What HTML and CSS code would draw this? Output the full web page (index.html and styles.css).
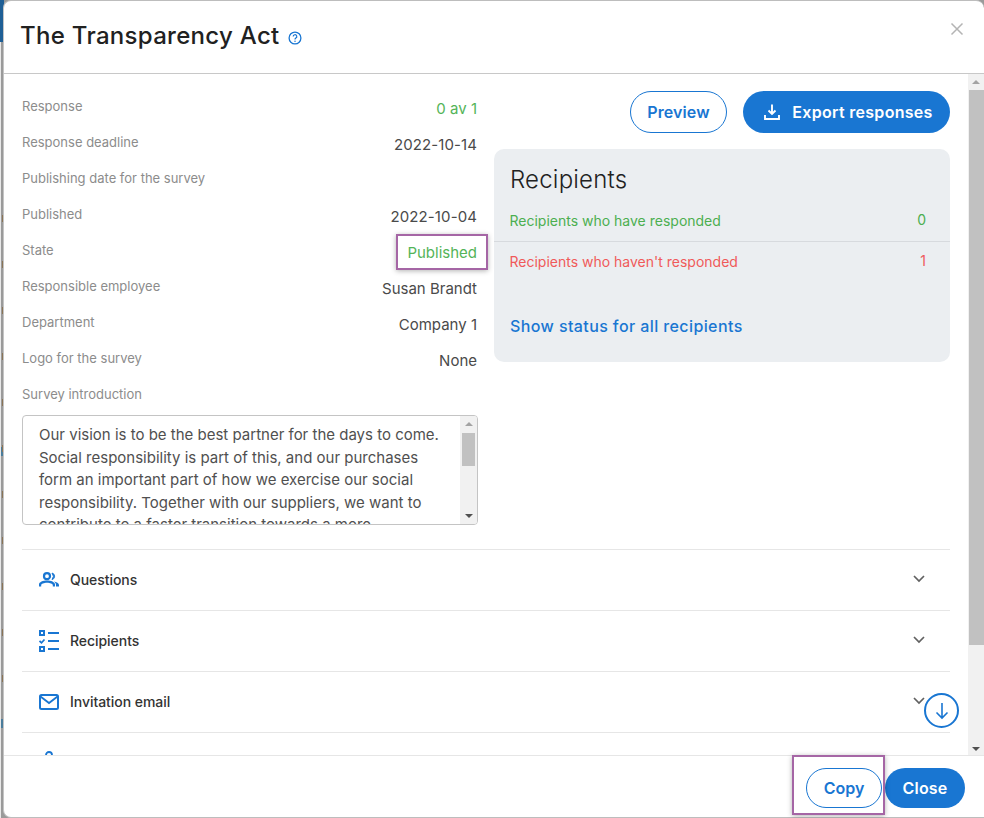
FILE: index.html
```html
<!DOCTYPE html>
<html lang="en">
<head>
<meta charset="utf-8">
<title>The Transparency Act</title>
<link rel="stylesheet" href="styles.css">
</head>
<body>
<div class="backdrop"></div>
<div class="modal">
  <header class="head">
    <h1 class="title">The Transparency Act</h1>
    <svg class="help" viewBox="0 0 14 14" width="14" height="14"><circle cx="7" cy="7" r="5.9" fill="none" stroke="#1976d2" stroke-width="1.3"/><path d="M5.2 5.6a1.8 1.8 0 1 1 2.7 1.5c-.6.4-.9.7-.9 1.3" fill="none" stroke="#1976d2" stroke-width="1.2"/><circle cx="7" cy="10.2" r=".75" fill="#1976d2"/></svg>
    <svg class="close-x" viewBox="0 0 14 14" width="14" height="14"><path d="M1.5 1.5l11 11M12.5 1.5l-11 11" stroke="#b4b4b4" stroke-width="1.5" fill="none"/></svg>
  </header>
  <div class="body">
    <main class="content">
      <div class="top">
        <section class="details">
          <div class="row"><span class="lab">Response</span><span class="val green">0 av 1</span></div>
          <div class="row"><span class="lab">Response deadline</span><span class="val date">2022-10-14</span></div>
          <div class="row"><span class="lab">Publishing date for the survey</span><span class="val"></span></div>
          <div class="row"><span class="lab">Published</span><span class="val date">2022-10-04</span></div>
          <div class="row"><span class="lab">State</span><span class="val green">Published</span></div>
          <div class="row"><span class="lab">Responsible employee</span><span class="val">Susan Brandt</span></div>
          <div class="row"><span class="lab">Department</span><span class="val">Company 1</span></div>
          <div class="row"><span class="lab">Logo for the survey</span><span class="val">None</span></div>
          <div class="row"><span class="lab">Survey introduction</span></div>
          <div class="intro">
            <p class="intro-text">Our vision is to be the best partner for the days to come. Social responsibility is part of this, and our purchases form an important part of how we exercise our social responsibility. Together with our suppliers, we want to contribute to a faster transition towards a more sustainable society.</p>
            <div class="mini-bar">
              <span class="arrow-up small"></span>
              <span class="mini-thumb"></span>
              <span class="arrow-down small"></span>
            </div>
          </div>
        </section>
        <section class="side">
          <div class="actions">
            <button class="btn outline preview">Preview</button>
            <button class="btn solid export">
              <svg viewBox="0 0 16 16" width="16" height="16"><path d="M8 .5v9.500M4.500 6.500L8 10l3.500-3.500M1 11v4h14v-4" fill="none" stroke="#fff" stroke-width="1.900"/></svg>
              Export responses
            </button>
          </div>
          <div class="card">
            <h2 class="card-title">Recipients</h2>
            <div class="stat green first"><span>Recipients who have responded</span><span class="num">0</span></div>
            <div class="stat red"><span>Recipients who haven't responded</span><span class="num">1</span></div>
            <a class="show-all">Show status for all recipients</a>
          </div>
        </section>
      </div>
      <div class="acc">
        <svg class="acc-icon" viewBox="0 0 20 16" width="20" height="16"><circle cx="8" cy="4.200" r="3" fill="none" stroke="#1976d2" stroke-width="2.200"/><path d="M13 1a3.400 3.400 0 0 1 0 6.600 5 5 0 0 0 0-6.600z" fill="#1976d2" stroke="#1976d2"/><path d="M0 15v-2C0 10.500 4 9 8 9s8 1.500 8 4v2h-2.200v-1.500c0-1.300-2.800-2.300-5.800-2.300s-5.800 1-5.800 2.300V15z" fill="#1976d2" transform="translate(0 -.5)"/><path d="M15 9.500c2.500.4 5 1.500 5 3.500v1.500h-3V13c0-1.500-.8-2.700-2-3.500z" fill="#1976d2"/></svg>
        <span class="acc-label">Questions</span>
        <svg class="chev" viewBox="0 0 12 8" width="12" height="8"><path d="M1 1l5 5 5-5" fill="none" stroke="#616161" stroke-width="1.700"/></svg>
      </div>
      <div class="acc">
        <svg class="acc-icon tall" viewBox="0 0 20 22" width="20" height="22"><path d="M1 1h4v4H1zM1 17h4v4H1z" fill="none" stroke="#1976d2" stroke-width="2"/><path d="M.5 11l2 1.800L5.500 9.500" fill="none" stroke="#1976d2" stroke-width="1.700"/><path d="M9 3h11M9 11h11M9 19h11" stroke="#1976d2" stroke-width="2"/></svg>
        <span class="acc-label">Recipients</span>
        <svg class="chev" viewBox="0 0 12 8" width="12" height="8"><path d="M1 1l5 5 5-5" fill="none" stroke="#616161" stroke-width="1.700"/></svg>
      </div>
      <div class="acc">
        <svg class="acc-icon" viewBox="0 0 20 16" width="20" height="16"><rect x="1" y="1" width="18" height="14" rx="1.500" fill="none" stroke="#1976d2" stroke-width="2"/><path d="M1.500 2.500L10 9l8.500-6.500" fill="none" stroke="#1976d2" stroke-width="1.800"/></svg>
        <span class="acc-label">Invitation email</span>
        <svg class="chev" viewBox="0 0 12 8" width="12" height="8"><path d="M1 1l5 5 5-5" fill="none" stroke="#616161" stroke-width="1.700"/></svg>
      </div>
      <div class="acc">
        <svg class="acc-icon" viewBox="0 0 20 16" width="20" height="16"><circle cx="10" cy="4" r="3" fill="none" stroke="#1976d2" stroke-width="1.800"/></svg>
      </div>
    </main>
    <div class="bar">
      <span class="arrow-up"></span>
      <span class="thumb"></span>
      <span class="arrow-down"></span>
    </div>
    <button class="jump" aria-label="Scroll down">
      <svg viewBox="0 0 16 20" width="16" height="20"><path d="M8 2v15M2.500 11.500L8 17l5.500-5.500" fill="none" stroke="#1976d2" stroke-width="1.600"/></svg>
    </button>
  </div>
  <footer class="foot">
    <button class="btn outline copy">Copy</button>
    <button class="btn solid close">Close</button>
  </footer>
</div>
<div class="mark mark-state"></div>
<div class="mark mark-copy"></div>
</body>
</html>
```

FILE: styles.css
```css
* { box-sizing: border-box; }
html, body { margin: 0; height: 100%; }
body {
  width: 984px;
  height: 818px;
  overflow: hidden;
  position: relative;
  background:
    linear-gradient(#1f5f96, #1f5f96) 0 0 / 4px 42px no-repeat,
    linear-gradient(#4a7d9c, #4a7d9c) 1px 447px / 2px 9px no-repeat,
    linear-gradient(#4a7d9c, #4a7d9c) 1px 719px / 2px 9px no-repeat,
    linear-gradient(90deg, #e8e8e8 0 1px, #9a9a9a 1px);
  font-family: Inter, "Liberation Sans", sans-serif;
  color: #333;
}
.backdrop {
  position: absolute;
  left: 2px;
  top: 215px;
  width: 2px;
  height: 476px;
  background: repeating-linear-gradient(180deg, #8a7456 0 7px, transparent 7px 46px);
}
.modal {
  position: relative;
  margin-left: 3px;
  width: 981px;
  height: 818px;
  background: #fff;
  border-top: 1px solid #bdbdbd;
  border-bottom: 1px solid #bdbdbd;
  border-left: 1px solid #c4c4c4;
  border-radius: 8px 8px 0 8px;
  display: flex;
  flex-direction: column;
  overflow: hidden;
}
.head {
  height: 73px;
  flex: none;
  display: flex;
  align-items: center;
  padding: 0 20px 3px 16px;
  border-bottom: 1px solid #c8c8c8;
}
.title {
  margin: 0;
  font-size: 24px;
  font-weight: 500;
  color: #212121;
  letter-spacing: .3px;
}
.help { margin: 4px 0 0 8px; }
.close-x { margin: -13px 0 0 auto; }
.body {
  flex: 1;
  min-height: 0;
  display: flex;
  position: relative;
  overflow: hidden;
}
.content {
  width: 964px;
  flex: none;
  padding: 14px 18px 0 18px;
  overflow: hidden;
}
.top { display: flex; gap: 16px; height: 461px; }
.details { width: 456px; flex: none; }
.row {
  height: 36px;
  display: flex;
  justify-content: space-between;
  align-items: flex-start;
}
.lab { height: 36px; font-size: 13px; line-height: 36px; color: #8c8c8c; }
.val {
  font-size: 15px;
  line-height: 36px;
  margin: 3px 1px 0 0;
  color: #4a4a4a;
}
.date { letter-spacing: .1px; }
.green { color: #4caf50; }
.red { color: #f05a5a; }
.val.green { color: #54b458; }
.intro {
  margin-top: 3px;
  height: 110px;
  border: 1px solid #c4c4c4;
  border-radius: 4px;
  position: relative;
  overflow: hidden;
}
.intro-text {
  margin: 0;
  padding: 8px 24px 0 16px;
  font-size: 15px;
  line-height: 22.500px;
  color: #505050;
}
.mini-bar {
  position: absolute;
  top: 0; right: 0; bottom: 0;
  width: 17px;
  background: #f1f1f1;
  display: flex;
  flex-direction: column;
  align-items: center;
}
.mini-thumb {
  width: 13px;
  height: 33px;
  margin-top: 7px;
  background: #c1c1c1;
}
.small { margin-top: 6px; }
.arrow-down.small { margin-top: auto; margin-bottom: 6px; }
.arrow-up, .arrow-down {
  display: block;
  width: 0; height: 0;
  border-left: 4px solid transparent;
  border-right: 4px solid transparent;
}
.arrow-up { border-bottom: 4px solid #a3a3a3; }
.arrow-down { border-top: 4px solid #505050; }
.side { width: 456px; flex: none; }
.actions {
  display: flex;
  justify-content: flex-end;
  gap: 16px;
  margin: 3px 0 16px;
}
.btn {
  font-family: inherit;
  font-size: 16px;
  font-weight: 600;
  height: 42px;
  border-radius: 21px;
  padding: 0;
  cursor: pointer;
}
.outline { background: #fff; border: 1px solid #1976d2; color: #1976d2; }
.solid { background: #1976d2; border: 0; color: #fff; }
.preview { width: 97px; letter-spacing: .1px; }
.export {
  width: 207px;
  display: flex;
  align-items: center;
  justify-content: center;
  gap: 12px;
  padding-left: 4px;
  letter-spacing: .3px;
}
.card {
  height: 213px;
  background: #ebeef1;
  border-radius: 10px;
  padding-top: 14px;
}
.card-title {
  margin: 0 0 12px 16px;
  font-size: 24px;
  font-weight: 300;
  line-height: 34px;
  color: #212121;
  letter-spacing: .2px;
}
.stat {
  display: flex;
  justify-content: space-between;
  padding: 0 24px 0 15.500px;
  height: 41px;
  line-height: 41px;
  font-size: 14px;
}
.stat.first { border-bottom: 1px solid #d7dade; height: 33px; line-height: 15px; padding-top: 4px; }
.stat.red { line-height: 40px; }
.num { font-size: 14px; margin-top: -1px; }
.show-all {
  display: block;
  margin: 33px 0 0 16px;
  font-size: 16px;
  font-weight: 500;
  color: #1976d2;
  letter-spacing: .4px;
}
.acc {
  height: 61px;
  border-top: 1px solid #e6e6e6;
  display: flex;
  align-items: center;
  padding: 0 25px 0 17px;
}
.acc-icon { flex: none; width: 20px; margin-right: 11px; }
.acc-label { font-size: 14px; font-weight: 500; color: #333; margin-top: -2px; letter-spacing: -.05px; }
.chev { margin-left: auto; margin-top: -2px; }
.acc:last-child { align-items: flex-start; padding-top: 18px; }
.bar {
  flex: none;
  width: 16px;
  background: #f1f1f1;
  display: flex;
  flex-direction: column;
  align-items: center;
}
.bar .arrow-up { margin-top: 6px; }
.thumb {
  width: 15px;
  height: 555px;
  margin-top: 6px;
  background: #c1c1c1;
}
.bar .arrow-down { margin-top: auto; margin-bottom: 4px; }
.jump {
  position: absolute;
  left: 920px;
  top: 619px;
  width: 35px;
  height: 35px;
  padding: 0;
  border: 2px solid #1976d2;
  border-radius: 50%;
  background: #fff;
  display: flex;
  align-items: center;
  justify-content: center;
}
.foot {
  height: 62px;
  flex: none;
  border-top: 1px solid #e6e6e6;
  display: flex;
  justify-content: flex-end;
  align-items: flex-start;
  gap: 3px;
  padding: 12px 19px 0 0;
}
.copy { width: 76px; height: 40px; border-radius: 20px; }
.close { width: 80px; height: 40px; border-radius: 20px; letter-spacing: .2px; }
.mark {
  position: absolute;
  border: 2px solid #a566a5;
  box-shadow: 0 1px 5px rgba(0,0,0,.3);
  pointer-events: none;
}
.mark-state { left: 396px; top: 234px; width: 92px; height: 36px; }
.mark-copy { left: 792px; top: 755px; width: 93px; height: 60px; }
```
